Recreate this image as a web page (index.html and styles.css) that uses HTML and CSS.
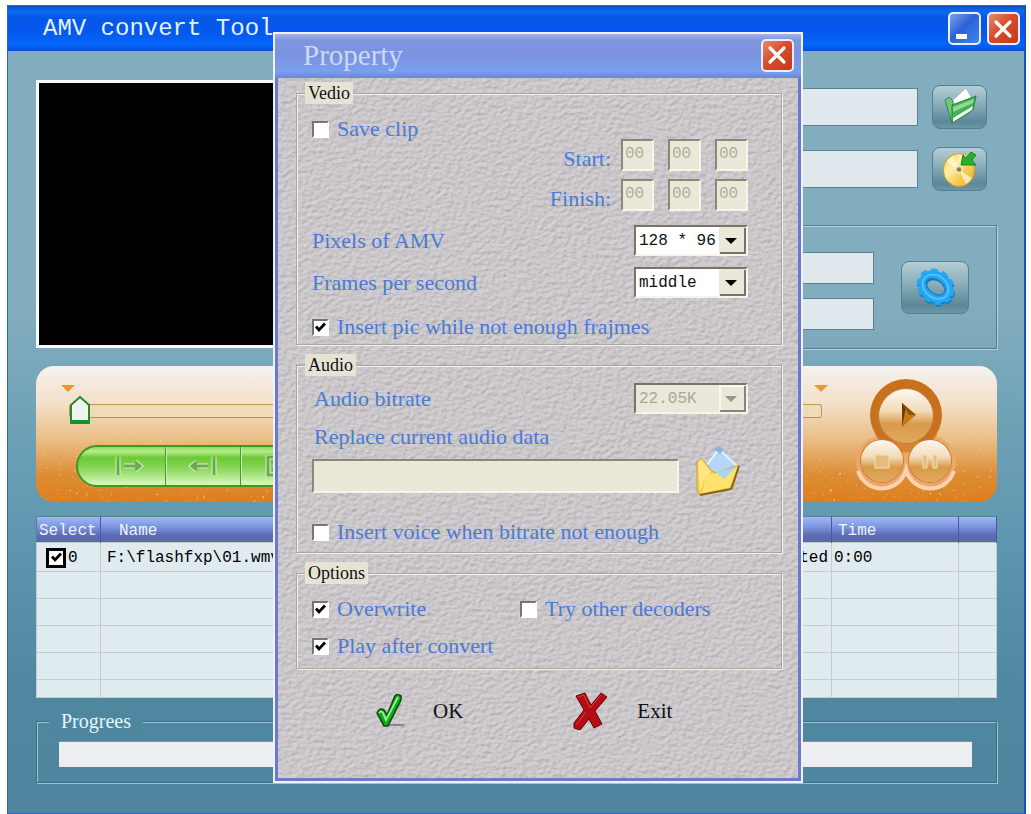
FILE: index.html
```html
<!DOCTYPE html>
<html lang="en">
<head>
<meta charset="utf-8">
<title>AMV convert Tool</title>
<link rel="stylesheet" href="styles.css">
</head>
<body>
<main class="window">
  <header class="titlebar">
    <h1 class="titlebar-text">AMV convert Tool</h1>
    <button class="win-btn win-btn-min" type="button" aria-label="Minimize">
      <svg viewBox="0 0 28 28" width="28" height="28"><rect x="6" y="19" width="11" height="5" fill="#fff"/></svg>
    </button>
    <button class="win-btn win-btn-close" type="button" aria-label="Close">
      <svg viewBox="0 0 28 28" width="28" height="28"><path d="M7 7L21 21M21 7L7 21" stroke="#fff" stroke-width="3.2" stroke-linecap="round"/></svg>
    </button>
  </header>

  <div class="content">
    <section class="top">
      <div class="video"></div>
      <div class="side">
        <div class="file-row">
          <input class="field" type="text" aria-label="Source file">
          <button class="tool-btn" type="button" aria-label="Open file">
            <svg viewBox="0 0 54 44" width="54" height="44">
              <path d="M19 17L34 3L39 12L40 22L22 30Z" fill="#fff" stroke="#9aa" stroke-width=".6"/>
              <path d="M13 15L17 12L21 16L22 33L20 38Z" fill="#6ccb78" stroke="#2e8a45"/>
              <path d="M20 20L44 11L41 25L20 38Z" fill="#45b05c" stroke="#278041"/>
              <path d="M21 22L42 14L41 18L21 27Z" fill="#8edb92"/>
              <path d="M21 33L41 21L40 25L21 37Z" fill="#eef9ea"/>
            </svg>
          </button>
        </div>
        <div class="file-row">
          <input class="field" type="text" aria-label="Output file">
          <button class="tool-btn" type="button" aria-label="Choose output">
            <svg viewBox="0 0 54 44" width="54" height="44">
              <defs><linearGradient id="disc" x1="0" y1="0" x2="1" y2="1"><stop offset="0" stop-color="#f5c33a"/><stop offset=".35" stop-color="#fff0b0"/><stop offset=".6" stop-color="#f7cf57"/><stop offset="1" stop-color="#e9a92c"/></linearGradient></defs>
              <ellipse cx="27" cy="23" rx="15.500" ry="16.500" fill="url(#disc)" stroke="#d99a24"/>
              <path d="M27 23L15 15A15 15 0 0 1 21 9Z M27 23L34 37A15 15 0 0 0 40 31Z" fill="#fffbe0" opacity=".7"/>
              <circle cx="27" cy="22.500" r="4" fill="#f3e6b4"/><circle cx="27" cy="22.500" r="2.300" fill="#8a7a58"/>
              <path d="M29 18L31 8L34 11L39 5L44 8L40 13L44 18Z" fill="#27b02c" stroke="#148a1c"/>
            </svg>
          </button>
        </div>
        <div class="out-group">
          <div class="out-fields">
            <input class="field field-small" type="text" aria-label="Width">
            <input class="field field-small" type="text" aria-label="Rate">
          </div>
          <button class="tool-btn tool-btn-large" type="button" aria-label="Settings">
            <svg viewBox="0 0 68 52" width="68" height="52">
              <g transform="rotate(38 35 26)" fill="none">
                <ellipse cx="36" cy="27" rx="18" ry="15" stroke="#1a78c2" stroke-width="4" stroke-dasharray="6 4.500"/>
                <ellipse cx="36" cy="27" rx="14" ry="11" stroke="#1a78c2" stroke-width="8"/>
                <ellipse cx="34.500" cy="26" rx="18" ry="15" stroke="#23a9f3" stroke-width="4" stroke-dasharray="6 4.500"/>
                <ellipse cx="34.500" cy="26" rx="14" ry="11" stroke="#23a9f3" stroke-width="8"/>
                <ellipse cx="34.500" cy="26" rx="14" ry="11" stroke="#5cc6fa" stroke-width="1.500"/>
                <ellipse cx="34.500" cy="26" rx="10.500" ry="7" stroke="#1c7fca" stroke-width="1.500"/>
              </g>
            </svg>
          </button>
        </div>
      </div>
    </section>

    <section class="player">
      <svg class="grain" width="100%" height="100%" aria-hidden="true">
        <filter id="specks" x="0" y="0" width="100%" height="100%">
          <feTurbulence type="fractalNoise" baseFrequency=".3" numOctaves="2" seed="4"/>
          <feColorMatrix values="0 0 0 0 1  0 0 0 0 .85  0 0 0 0 .62  8 0 0 0 -5.6"/>
        </filter>
        <rect width="100%" height="100%" filter="url(#specks)"/>
      </svg>
      <div class="deck">
        <div class="marks">
          <svg width="14" height="7" viewBox="0 0 14 7"><path d="M0 0H14L7 7Z" fill="#ee9630"/></svg>
          <svg width="14" height="7" viewBox="0 0 14 7"><path d="M0 0H14L7 7Z" fill="#ee9630"/></svg>
        </div>
        <input class="seek" type="range" min="0" max="100" value="0" aria-label="Position">
        <div class="pill">
          <button class="pill-btn pill-first" type="button" aria-label="Mark start">
            <svg viewBox="0 0 30 22" width="30" height="22"><path class="halo" d="M4 2V20M10 11H25M21 7L26 11L21 15"/><path class="ink" d="M4 2V20M10 11H25M21 7L26 11L21 15"/></svg>
          </button>
          <button class="pill-btn" type="button" aria-label="Mark end">
            <svg viewBox="0 0 30 22" width="30" height="22"><path class="halo" d="M26 2V20M20 11H5M9 7L4 11L9 15"/><path class="ink" d="M26 2V20M20 11H5M9 7L4 11L9 15"/></svg>
          </button>
          <button class="pill-btn" type="button" aria-label="Select all">
            <svg viewBox="0 0 30 22" width="30" height="22"><path class="halo" d="M5 2H25V20H5Z"/><path class="ink" d="M5 2H25V20H5ZM9 6L13 10M9 16L13 12"/></svg>
          </button>
        </div>
      </div>
      <div class="transport">
        <svg class="transport-back" viewBox="0 0 104 112" width="104" height="112" aria-hidden="true">
          <circle cx="28" cy="83" r="26" fill="#eda869"/><circle cx="76" cy="83" r="26" fill="#eda869"/>
          <path d="M4 92A25 25 0 0 0 52 91A25 25 0 0 0 100 92" fill="none" stroke="#f7d3b0" stroke-width="4"/>
          <circle cx="52" cy="36" r="36" fill="#c8711d"/>
          <path d="M20 54A36 36 0 0 0 84 54L76 62H28Z" fill="#d98432"/>
        </svg>
        <button class="round round-play" type="button" aria-label="Play">
          <svg viewBox="0 0 54 54" width="54" height="54"><path d="M23 14L37 26L23 38Z" fill="#c97913"/><path d="M23 14L27 18L23 38Z" fill="#6b3d08"/><path d="M23 14L37 26L30 26Z" fill="#8c520c"/></svg>
        </button>
        <button class="round" type="button" aria-label="Stop">
          <svg viewBox="0 0 42 42" width="42" height="42"><rect x="14" y="15" width="14" height="13" fill="#e3bd7e" stroke="#f5dcb0"/></svg>
        </button>
        <button class="round" type="button" aria-label="Pause">
          <svg viewBox="0 0 42 42" width="42" height="42"><path d="M14 15H18V28H14ZM24 15H28V28H24Z" fill="#e3bd7e" stroke="#f5dcb0"/></svg>
        </button>
      </div>
    </section>

    <table class="list">
      <colgroup><col class="c-select"><col><col class="c-state"><col class="c-time"><col class="c-end"></colgroup>
      <thead><tr><th class="h-select">Select</th><th class="h-name">Name</th><th></th><th>Time</th><th></th></tr></thead>
      <tbody>
        <tr class="first"><td><label class="pick"><input type="checkbox" class="row-check" checked>0</label></td><td class="d-name">F:\flashfxp\01.wmv</td><td class="d-state">Converted</td><td>0:00</td><td></td></tr>
        <tr><td></td><td></td><td></td><td></td><td></td></tr>
        <tr><td></td><td></td><td></td><td></td><td></td></tr>
        <tr><td></td><td></td><td></td><td></td><td></td></tr>
        <tr><td></td><td></td><td></td><td></td><td></td></tr>
        <tr class="last"><td></td><td></td><td></td><td></td><td></td></tr>
      </tbody>
    </table>

    <fieldset class="progress-group">
      <legend class="progress-legend">Progrees</legend>
      <div class="bar" role="progressbar" aria-label="Progrees" aria-valuenow="0"></div>
    </fieldset>
  </div>

  <section class="dialog" role="dialog" aria-labelledby="dialog-title">
    <svg class="texture" width="100%" height="100%" aria-hidden="true">
      <filter id="leather" x="0" y="0" width="100%" height="100%" color-interpolation-filters="sRGB">
        <feTurbulence type="fractalNoise" baseFrequency=".2 .26" numOctaves="2" seed="8"/>
        <feDiffuseLighting surfaceScale=".9" diffuseConstant="1.08" lighting-color="#d2ced2"><feDistantLight azimuth="235" elevation="64"/></feDiffuseLighting>
      </filter>
      <rect width="100%" height="100%" fill="#cac7cb"/>
      <rect width="100%" height="100%" filter="url(#leather)" opacity=".6"/>
    </svg>
    <header class="dialog-bar">
      <h2 class="dialog-title" id="dialog-title">Property</h2>
      <button class="win-btn win-btn-close" type="button" aria-label="Close dialog">
        <svg viewBox="0 0 28 28" width="28" height="28"><path d="M7 7L21 21M21 7L7 21" stroke="#fff" stroke-width="3.2" stroke-linecap="round"/></svg>
      </button>
    </header>
    <form class="form">
      <fieldset class="group">
        <legend class="legend">Vedio</legend>
        <div class="group-body group-video">
          <label class="check"><input type="checkbox">Save clip</label>
          <div class="times">
            <span class="time-label" id="start-label">Start:</span>
            <input class="time" value="00" disabled aria-labelledby="start-label"><input class="time" value="00" disabled aria-labelledby="start-label"><input class="time" value="00" disabled aria-labelledby="start-label">
            <span class="time-label" id="finish-label">Finish:</span>
            <input class="time" value="00" disabled aria-labelledby="finish-label"><input class="time" value="00" disabled aria-labelledby="finish-label"><input class="time" value="00" disabled aria-labelledby="finish-label">
          </div>
          <div class="pair pair-pixels"><label for="pixels">Pixels of AMV</label><select class="combo" id="pixels"><option>128 * 96</option></select></div>
          <div class="pair pair-frames"><label for="frames">Frames per second</label><select class="combo" id="frames"><option>middle</option></select></div>
          <label class="check"><input type="checkbox" checked>Insert pic while not enough frajmes</label>
        </div>
      </fieldset>

      <fieldset class="group">
        <legend class="legend">Audio</legend>
        <div class="group-body group-audio">
          <div class="pair pair-rate"><label for="bitrate">Audio bitrate</label><select class="combo" id="bitrate" disabled><option>22.05K</option></select></div>
          <label class="replace-label" for="replace">Replace current audio data</label>
          <div class="replace">
            <input class="path" id="replace" type="text" disabled>
            <button class="plain" type="button" aria-label="Browse">
              <svg viewBox="0 0 46 50" width="46" height="50">
                <path d="M24 3L44 22L26 38L8 24Z" fill="#b5d6f5" stroke="#e2f1ff" stroke-width="2"/>
                <path d="M19 3L24 0L29 3L25 8Z" fill="#86b5d8"/>
                <path d="M2 16L6 12L17 25L21 27L44 19L38 43L6 49L2 46Z" fill="#f6ce45" stroke="#c9992a" stroke-width=".8"/>
                <path d="M3 17L6 13L16 26L9 34L5 46Z" fill="#ffe584"/>
                <path d="M11 29L23 27L28 29L43 21L36 41L7 47Z" fill="#ffe16c"/>
                <path d="M21 26L41 21L29 33Z" fill="#a6d7ee"/>
                <path d="M5 49L36 43L44 20" fill="none" stroke="#806224" stroke-width="2"/>
              </svg>
            </button>
          </div>
          <label class="check"><input type="checkbox">Insert voice when bitrate not enough</label>
        </div>
      </fieldset>

      <fieldset class="group">
        <legend class="legend">Options</legend>
        <div class="group-body group-options">
          <label class="check"><input type="checkbox" checked>Overwrite</label>
          <label class="check"><input type="checkbox">Try other decoders</label>
          <label class="check"><input type="checkbox" checked>Play after convert</label>
        </div>
      </fieldset>

      <div class="actions">
        <button class="plain action" type="button">
          <svg viewBox="0 0 32 38" width="32" height="38">
            <path d="M14 33H30" stroke="#888" stroke-width="2"/>
            <path d="M3 21Q6 15 10 18L13 23L21 4Q23 1 27 4Q28 7 24 14L14 34H10Z" fill="#16a51c" stroke="#0b4d10" stroke-width="1.600"/>
            <path d="M5 21Q7 18 9 21L12 28L24 5" fill="none" stroke="#8df08a" stroke-width="2"/>
          </svg>
          OK
        </button>
        <button class="plain action action-exit" type="button">
          <svg viewBox="0 0 34 38" width="34" height="38">
            <path d="M3 4L12 1L18 13L28 1L34 5L22 19L29 32L21 36L16 27L7 38L1 36L1 31L11 18Z" fill="#b50d14" stroke="#650509"/>
            <path d="M5 5L11 3L17 16L28 3M3 33L13 20" fill="none" stroke="#d93a3a"/>
          </svg>
          Exit
        </button>
      </div>
    </form>
  </section>
</main>
</body>
</html>
```
FILE: styles.css
```css
* { box-sizing: border-box; }

body {
  margin: 0;
  padding: 5px 5px 0 7px;
  background: #fff;
  font-family: "Liberation Serif", serif;
}

button, input, select { margin: 0; font: inherit; }
button { padding: 0; border: 0; background: none; }
svg { display: block; }

.window {
  position: relative;
  min-height: calc(100vh - 5px);
  border: 1px solid #2a66c8;
  border-right: 2px solid #1c4fc0;
  background: linear-gradient(#82adbe 0, #82adbe 300px, #5f98b0 520px, #4f86a0 690px, #4f859e 100%);
}

/* Title bars */
.titlebar {
  display: flex;
  align-items: center;
  gap: 6px;
  height: 45px;
  padding: 0 4px 0 35px;
  background: linear-gradient(#0a4fc4 0, #0c6bf2 5px, #0657e6 12px, #0559ee 60%, #0566fb 85%, #0650d8 100%);
}
.titlebar-text {
  flex: 1;
  margin: 0;
  color: #e4f2fb;
  font: 24px/28px "Liberation Mono", monospace;
}
.win-btn {
  width: 33px;
  height: 33px;
  border: 2px solid #e8eefb;
  border-radius: 5px;
  overflow: hidden;
}
.win-btn-min { background: linear-gradient(135deg, #7ba3ee, #2b62d6 45%, #3d86f0); }
.win-btn-close { background: linear-gradient(135deg, #e58b6d, #d64d2c 45%, #c63a1a); }

.content { padding: 29px 27px 26px 28px; }

/* Preview and file pickers */
.top { display: flex; gap: 60px; }
.video {
  flex: 0 0 420px;
  height: 268px;
  border: 3px solid #f4fbfd;
  background: #000;
}
.side { flex: 1; padding-top: 5px; }
.file-row {
  display: flex;
  align-items: center;
  gap: 14px;
  height: 44px;
  margin-bottom: 18px;
  padding-right: 10px;
}
.field {
  flex: 1;
  min-width: 0;
  height: 38px;
  padding: 0 6px;
  border: 1px solid #5b8291;
  background: #dfe9ed;
}
.field-small { flex: none; width: 100%; height: 32px; }
.tool-btn {
  width: 55px;
  height: 44px;
  border: 1px solid #557f90;
  border-radius: 8px;
  background: linear-gradient(#b6cdd6, #8db0bd 40%, #5b8898 85%, #6a98a6);
}
.tool-btn svg { margin: -1px; }
.tool-btn-large { width: 68px; height: 53px; }
.out-group {
  display: flex;
  align-items: center;
  gap: 27px;
  height: 124px;
  margin-top: 34px;
  padding: 0 27px;
  border: 1px solid #517e90;
  box-shadow: inset 1px 1px #b4d2dc, 1px 1px #b4d2dc;
}
.out-fields { flex: 1; display: grid; gap: 14px; padding-top: 8px; }

/* Player */
.player {
  position: relative;
  display: flex;
  height: 136px;
  margin-top: 17px;
  padding: 13px 39px 0 25px;
  border-radius: 18px;
  overflow: hidden;
  background: linear-gradient(#f5f2ef, #f3e0c8 28%, #e9bd82 55%, #dd8c34 80%, #dd7f1e);
}
.grain {
  position: absolute;
  inset: 0;
  opacity: .5;
  mask-image: linear-gradient(transparent 30%, #000 70%);
}
.deck { position: relative; flex: 1; margin-right: 26px; }
.marks { display: flex; justify-content: space-between; padding-top: 6px; }
.seek {
  display: block;
  width: calc(100% - 14px);
  height: 30px;
  margin: 4px 0 0 8px;
  appearance: none;
  background: none;
}
.seek::-webkit-slider-runnable-track {
  height: 14px;
  border: 1px solid #b99a58;
  border-bottom-color: #b8924e;
  border-radius: 3px;
  background: #efdcb6;
}
.seek::-webkit-slider-thumb {
  width: 20px;
  height: 29px;
  margin-top: -9px;
  appearance: none;
  background: url("data:image/svg+xml,%3Csvg xmlns='http://www.w3.org/2000/svg' viewBox='0 0 20 29'%3E%3Cpath d='M1 9L10 1L19 9V27H1Z' fill='%23fff' stroke='%23258a2c' stroke-width='2'/%3E%3Cpath d='M3 10L10 4L17 10V23H3Z' fill='%23edf6ee'/%3E%3Cpath d='M1 24H19V28H1Z' fill='%23179422'/%3E%3C/svg%3E");
}
.pill {
  display: flex;
  width: 560px;
  height: 42px;
  margin: 19px 0 0 15px;
  border: 2px solid #3d9a20;
  border-radius: 21px;
  overflow: hidden;
  background: linear-gradient(#8fd95c, #b5ec8c 12%, #6cc934 28%, #86d557 55%, #d3f5b4 95%);
}
.pill-btn {
  display: grid;
  place-items: center;
  flex: 0 0 75px;
  border-right: 1px solid #4a9c2c;
  box-shadow: 1px 0 #c9efab;
}
.pill-first { flex-basis: 88px; padding-left: 14px; }
.halo { fill: none; stroke: #d5f3bf; stroke-width: 5; }
.ink { fill: none; stroke: #6da852; stroke-width: 3; }

.transport {
  position: relative;
  display: grid;
  grid-template-columns: 42px 42px;
  justify-content: center;
  column-gap: 6px;
  width: 104px;
  padding-top: 10px;
  align-content: start;
}
.transport-back { position: absolute; left: 0; top: 0; }
.round {
  position: relative;
  width: 42px;
  height: 42px;
  margin-top: -3px;
  border-radius: 50%;
  background: linear-gradient(#fbf7f2, #f3dcba 40%, #d99a4a 65%, #e0aa60);
  box-shadow: 0 0 0 1px #c47d30;
}
.round-play {
  grid-column: 1 / 3;
  justify-self: center;
  width: 54px;
  height: 54px;
  margin: 0;
}

/* File list */
.list {
  width: 100%;
  margin-top: 14px;
  border: 1px solid #5d7f90;
  border-collapse: collapse;
  table-layout: fixed;
  background: #dfebee;
  font: 16px/20px "Liberation Mono", monospace;
}
.c-select { width: 64px; }
.c-state { width: 130px; }
.c-time { width: 127px; }
.c-end { width: 38px; }
.list thead tr { height: 26px; background: linear-gradient(#9dbaf6, #7f98e2 35%, #5d6cb4 70%, #5b65ab); }
.list th {
  padding: 2px 0 0 6px;
  border-right: 1px solid #4c5a9c;
  color: #eef4ff;
  font-weight: 400;
  text-align: left;
}
.list .h-select { padding-left: 2px; }
.list .h-name { padding-left: 18px; }
.list tbody tr { height: 27px; }
.list tbody .first { height: 29px; }
.list tbody .last { height: 18px; }
.list td { padding: 1px 0 0 2px; border: 1px solid #c5cccb; }
.list .d-name { padding-left: 6px; }
.list .d-state { padding-right: 3px; text-align: right; }
.pick { display: flex; align-items: center; gap: 2px; padding-left: 7px; }

input[type="checkbox"] {
  flex: none;
  width: 17px;
  height: 17px;
  appearance: none;
  border: 2px solid #fff;
  border-top-color: #77756c;
  border-left-color: #77756c;
  background: #fff;
}
input[type="checkbox"]:checked {
  background: #fff url("data:image/svg+xml,%3Csvg xmlns='http://www.w3.org/2000/svg' viewBox='0 0 13 13'%3E%3Cpath d='M2 5.500L5 9L11 2.500' fill='none' stroke='%23000' stroke-width='2.800'/%3E%3C/svg%3E") center / 13px 13px no-repeat;
}
.pick .row-check { width: 20px; height: 20px; border: 3px solid #000; }

/* Progress */
.progress-group {
  min-width: 0;
  margin: 11px 0 0;
  padding: 8px 24px 15px 22px;
  border: 1px solid #3d6d84;
  box-shadow: inset 1px 1px #9fc5d3, 1px 1px #9fc5d3;
}
.progress-legend {
  margin-left: -10px;
  padding: 0 12px;
  background: #4f86a0;
  color: #e6f6fb;
  font-size: 20px;
  line-height: 24px;
}
.bar { height: 26px; border-top: 1px solid #8b8f94; background: #edeef2; }

/* Property dialog */
.dialog {
  position: absolute;
  left: 265px;
  top: 26px;
  width: 530px;
  border: 2px solid #eef2fc;
  background: #cac7cb;
  color: #4a7bd4;
  font-size: 22px;
  line-height: 24px;
}
.texture { position: absolute; inset: 0; }
.dialog-bar {
  position: relative;
  display: flex;
  align-items: center;
  height: 44px;
  padding: 0 7px 2px 28px;
  background: linear-gradient(#a3b3ea 0, #7f95e0 6px, #7b93df 50%, #789ff0 85%, #6e84dc);
}
.dialog-title {
  flex: 1;
  margin: 0;
  color: #ced8f5;
  font-size: 29px;
  font-weight: 400;
  line-height: 32px;
}
.form {
  position: relative;
  padding: 4px 16px 48px 18px;
  border: 3px solid #6d78cf;
  border-top: 0;
}
.group {
  min-width: 0;
  margin: 0 0 9px;
  padding: 0 33px 0 15px;
  border: 1px solid #aaa69f;
  box-shadow: inset 1px 1px #f4f1e9, 1px 1px #f4f1e9;
}
.legend {
  margin-left: -7px;
  padding: 0 3px;
  background: #e6e3d4;
  color: #111;
  font-size: 18px;
  line-height: 22px;
}
.group-body { display: flex; flex-direction: column; }
.check { display: flex; align-items: center; gap: 8px; }

.group-video { padding: 13px 0 5px; }
.times {
  display: grid;
  grid-template-columns: auto 33px 33px 33px;
  justify-content: end;
  gap: 8px 14px;
  margin-top: -2px;
}
.time-label { align-self: end; margin-right: -4px; text-align: right; }
.time {
  width: 33px;
  height: 32px;
  padding: 0 0 3px 2px;
  border: 2px solid #f7f4ea;
  border-top-color: #8b877b;
  border-left-color: #8b877b;
  background: #ebe8da;
  color: #b0ac9c;
  font: 16px/20px "Liberation Mono", monospace;
}
.pair { display: flex; align-items: center; justify-content: space-between; height: 31px; }
.pair-pixels { margin-top: 14px; }
.pair-frames { margin: 11px 0 17px; }

.combo {
  width: 114px;
  height: 31px;
  padding: 0 0 0 3px;
  appearance: none;
  border: 2px solid #f7f4ea;
  border-top-color: #77746a;
  border-left-color: #77746a;
  border-radius: 0;
  background: #fff url("data:image/svg+xml,%3Csvg xmlns='http://www.w3.org/2000/svg' viewBox='0 0 27 27'%3E%3Cpath d='M0 0H27V27H0Z' fill='%23ebe8da'/%3E%3Cpath d='M1 26H26V1' fill='none' stroke='%2375736a' stroke-width='2'/%3E%3Cpath d='M6 11H18L12 17Z' fill='%23000'/%3E%3C/svg%3E") right top / 27px 27px no-repeat;
  color: #111;
  font: 16px/20px "Liberation Mono", monospace;
}
.combo:disabled {
  background: #ebe8da url("data:image/svg+xml,%3Csvg xmlns='http://www.w3.org/2000/svg' viewBox='0 0 27 27'%3E%3Cpath d='M0 0H27V27H0Z' fill='%23ebe8da'/%3E%3Cpath d='M1 26V1H26' fill='none' stroke='%23fbf9f0' stroke-width='2'/%3E%3Cpath d='M1 26H26V1' fill='none' stroke='%2388857a' stroke-width='2'/%3E%3Cpath d='M6 11H18L12 17Z' fill='%2399968a'/%3E%3C/svg%3E") right top / 27px 27px no-repeat;
  color: #aaa697;
  opacity: 1;
}

.group-audio { padding: 7px 0 8px; }
.pair-rate { padding-left: 2px; }
.replace-label { margin: 11px 0 0 2px; }
.replace {
  display: flex;
  align-items: center;
  gap: 16px;
  height: 50px;
  margin: -3px 0 24px;
}
.path {
  flex: 1;
  min-width: 0;
  height: 34px;
  margin-top: 10px;
  border: 2px solid #f7f4ea;
  border-top-color: #8b877b;
  border-left-color: #8b877b;
  background: #ebe8da;
}
.replace .plain { margin-right: 7px; }

.group-options {
  display: grid;
  grid-template-columns: 208px 1fr;
  row-gap: 13px;
  padding: 13px 0 10px;
}

.actions { display: flex; gap: 110px; padding: 14px 0 0 78px; }
.action { display: flex; align-items: center; gap: 27px; color: #111; font-size: 21px; }
.action-exit { gap: 30px; }
```
